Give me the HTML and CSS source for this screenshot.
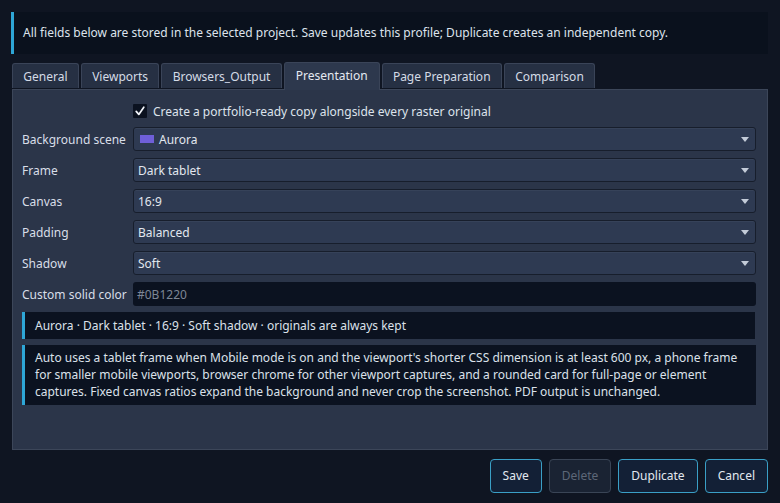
FILE: index.html
```html
<!DOCTYPE html>
<html>
<head>
<meta charset="utf-8">
<link rel="stylesheet" href="styles.css">
</head>
<body>
<div class="dialog">
  <div class="banner">All fields below are stored in the selected project. Save updates this profile; Duplicate creates an independent copy.</div>
  <div class="tabs">
    <div class="tab">General</div>
    <div class="tab">Viewports</div>
    <div class="tab">Browsers_Output</div>
    <div class="tab active">Presentation</div>
    <div class="tab">Page Preparation</div>
    <div class="tab">Comparison</div>
  </div>
  <div class="panel">
    <div class="form">
      <div class="label"></div>
      <div class="check-row"><span class="checkbox"><svg viewBox="0 0 14 14" width="14" height="14"><path d="M3.2 7.4 L5.8 10.4 L10.8 3.2" fill="none" stroke="#f2f5fa" stroke-width="1.7" stroke-linecap="round" stroke-linejoin="round"/></svg></span><span>Create a portfolio-ready copy alongside every raster original</span></div>

      <div class="label">Background scene</div>
      <div class="combo"><span class="swatch"></span><span class="value">Aurora</span><span class="arrow"></span></div>

      <div class="label">Frame</div>
      <div class="combo"><span class="value">Dark tablet</span><span class="arrow"></span></div>

      <div class="label">Canvas</div>
      <div class="combo"><span class="value">16:9</span><span class="arrow"></span></div>

      <div class="label">Padding</div>
      <div class="combo"><span class="value">Balanced</span><span class="arrow"></span></div>

      <div class="label">Shadow</div>
      <div class="combo"><span class="value">Soft</span><span class="arrow"></span></div>

      <div class="label">Custom solid color</div>
      <div class="input"><span class="placeholder">#0B1220</span></div>
    </div>
    <div class="note summary">Aurora · Dark tablet · 16:9 · Soft shadow · originals are always kept</div>
    <div class="note desc">Auto uses a tablet frame when Mobile mode is on and the viewport's shorter CSS dimension is at least 600 px, a phone frame for smaller mobile viewports, browser chrome for other viewport captures, and a rounded card for full-page or element captures. Fixed canvas ratios expand the background and never crop the screenshot. PDF output is unchanged.</div>
  </div>
  <div class="buttons">
    <div class="btn">Save</div>
    <div class="btn disabled">Delete</div>
    <div class="btn">Duplicate</div>
    <div class="btn">Cancel</div>
  </div>
</div>
</body>
</html>
```
FILE: styles.css
```css
html, body {
  margin: 0;
  padding: 0;
  background: #0f1522;
  width: 780px;
  height: 503px;
  overflow: hidden;
}
body {
  font-family: "Noto Sans", "DejaVu Sans", sans-serif;
  font-size: 12px;
  color: #dde3ec;
}
.dialog {
  padding: 12px 12px 0 12px;
  display: flex;
  flex-direction: column;
}
.banner {
  background: #0a111d;
  border-left: 3px solid #2ea6d6;
  height: 42px;
  line-height: 42px;
  padding-left: 9px;
  margin-left: -1px;
  white-space: nowrap;
}
.tabs {
  display: flex;
  gap: 2px;
  margin-top: 8px;
  align-items: flex-end;
  height: 27px;
  position: relative;
  z-index: 1;
}
.tab {
  background: #263043;
  border: 1px solid #3a4458;
  border-bottom: none;
  border-radius: 3px 3px 0 0;
  height: 25px;
  line-height: 25px;
  padding: 0 10.3px;
  margin-bottom: 1px;
  color: #d4dbe6;
  box-sizing: border-box;
}
.tab.active {
  background: #2d384d;
  height: 28px;
  line-height: 26px;
  margin-bottom: -1px;
  padding: 0 11px;
  color: #e4e9f1;
}
.panel {
  background: #2b3549;
  border: 1px solid #3c4659;
  height: 361px;
  box-sizing: border-box;
  padding: 14px 11px 0 9px;
}
.form {
  display: grid;
  grid-template-columns: 111px 1fr;
  row-gap: 7px;
  align-items: center;
}
.label {
  color: #d8dee8;
  white-space: nowrap;
}
.check-row {
  display: flex;
  align-items: center;
  gap: 6px;
  height: 14px;
  margin-bottom: 2px;
}
.checkbox {
  width: 14px;
  height: 14px;
  background: #0b1220;
  display: inline-flex;
  align-items: center;
  justify-content: center;
  border-radius: 1px;
}
.checkbox svg { display: block; }
.combo {
  height: 24px;
  box-sizing: border-box;
  background: #2e3a52;
  border: 1px solid #171e2c;
  border-radius: 3px;
  box-shadow: inset 0 1px 0 #364259;
  display: flex;
  align-items: center;
  padding: 0 0 0 4px;
}
.combo .value { flex: 1; color: #e2e7ef; }
.swatch {
  width: 14px;
  height: 8px;
  background: #6f5fd8;
  margin-right: 5px;
  margin-left: 2px;
}
.arrow {
  width: 0;
  height: 0;
  border-left: 4px solid transparent;
  border-right: 4px solid transparent;
  border-top: 5px solid #c3cbd8;
  margin-right: 6px;
}
.input {
  height: 24px;
  box-sizing: border-box;
  background: #0b1220;
  border-radius: 3px;
  display: flex;
  align-items: center;
  padding-left: 4px;
}
.placeholder { color: #7d8696; }
.note {
  background: #0b1220;
  border-left: 3px solid #2ea6d6;
  padding-left: 10px;
  color: #dbe1ea;
}
.summary {
  margin-top: 6px;
  height: 27px;
  line-height: 27px;
  margin-right: 1px;
}
.desc {
  margin-top: 6px;
  padding-top: 4px;
  padding-bottom: 5px;
  line-height: 17px;
  padding-right: 10px;
}
.buttons {
  display: flex;
  justify-content: flex-end;
  gap: 7px;
  margin-top: 9px;
}
.btn {
  height: 34px;
  line-height: 32px;
  box-sizing: border-box;
  border: 1px solid #3a9fc6;
  border-radius: 4px;
  background: #132036;
  padding: 0 12px;
  color: #e2e8f0;
}
.btn.disabled {
  border-color: #3a4556;
  color: #5d6778;
  background: #1a2333;
}
```
